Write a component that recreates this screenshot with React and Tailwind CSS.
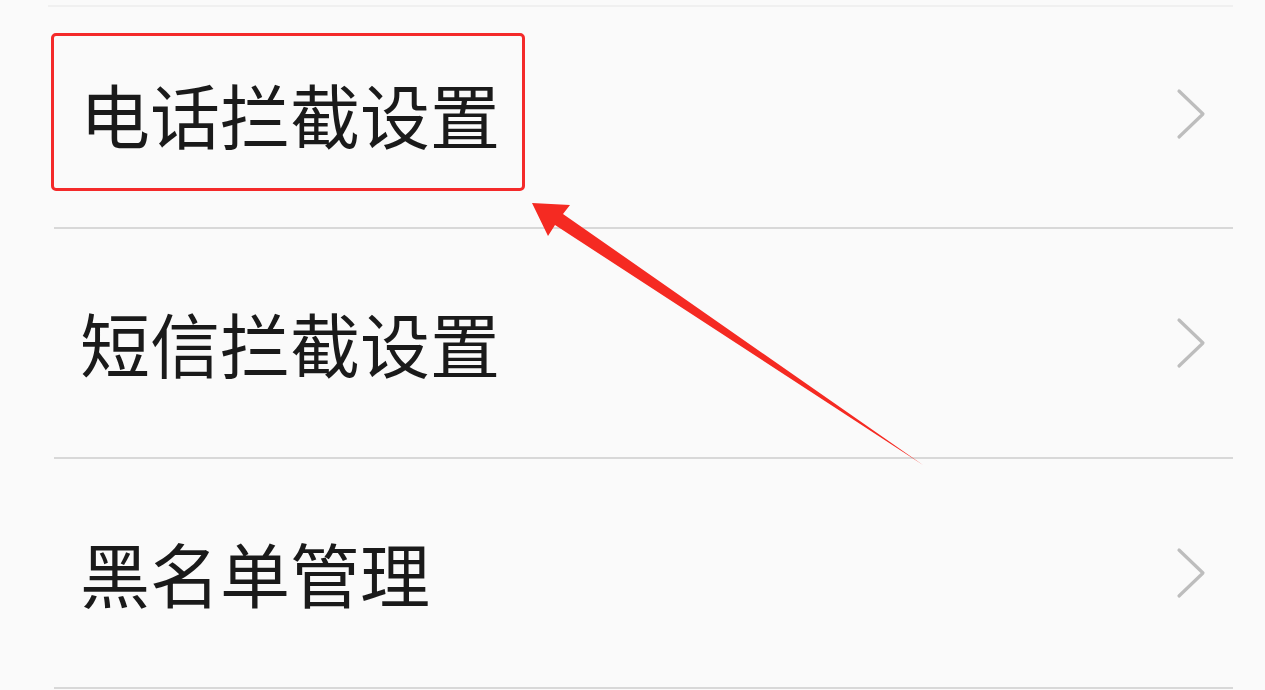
import React from "react";

function Chevron() {
  return (
    <svg width="30" height="52" viewBox="0 0 30 52" className="shrink-0">
      <polyline points="3,3 27,26 3,49" fill="none" stroke="#bdbdbd" strokeWidth="3.2" strokeLinecap="round" strokeLinejoin="round" />
    </svg>
  );
}

function Row({ label, h }) {
  return (
    <div className={`flex items-center justify-between pl-[26px] pr-[27px] ${h}`}>
      <span className="text-[70px] leading-none text-[#1a1a1a]" style={{ fontFamily: '"Noto Sans CJK SC", "Noto Sans", sans-serif' }}>{label}</span>
      <Chevron />
    </div>
  );
}

export default function App() {
  return (
    <div className="relative w-[1265px] h-[690px] overflow-hidden bg-[#fafafa]">
      <div className="ml-[54px] mr-[32px] flex flex-col">
        <div className="absolute left-[48px] right-[32px] top-[5px] h-[2px] bg-[#f0f0f0]" />
        <Row label="电话拦截设置" h="h-[227px]" />
        <div className="h-[2px] bg-[#d8d8d8]" />
        <Row label="短信拦截设置" h="h-[228px]" />
        <div className="h-[2px] bg-[#d8d8d8]" />
        <Row label="黑名单管理" h="h-[228px]" />
        <div className="h-[2px] bg-[#d8d8d8]" />
      </div>
      <div className="absolute left-[51px] top-[33px] w-[474px] h-[158px] border-[3px] border-[#f42a2a] rounded-[5px]" />
      <svg className="absolute left-0 top-0" width="1265" height="690" viewBox="0 0 1265 690">
        <polygon points="532,203 570,205 563,214 923,465 555,225 548,236" fill="#f52a22" />
      </svg>
    </div>
  );
}
